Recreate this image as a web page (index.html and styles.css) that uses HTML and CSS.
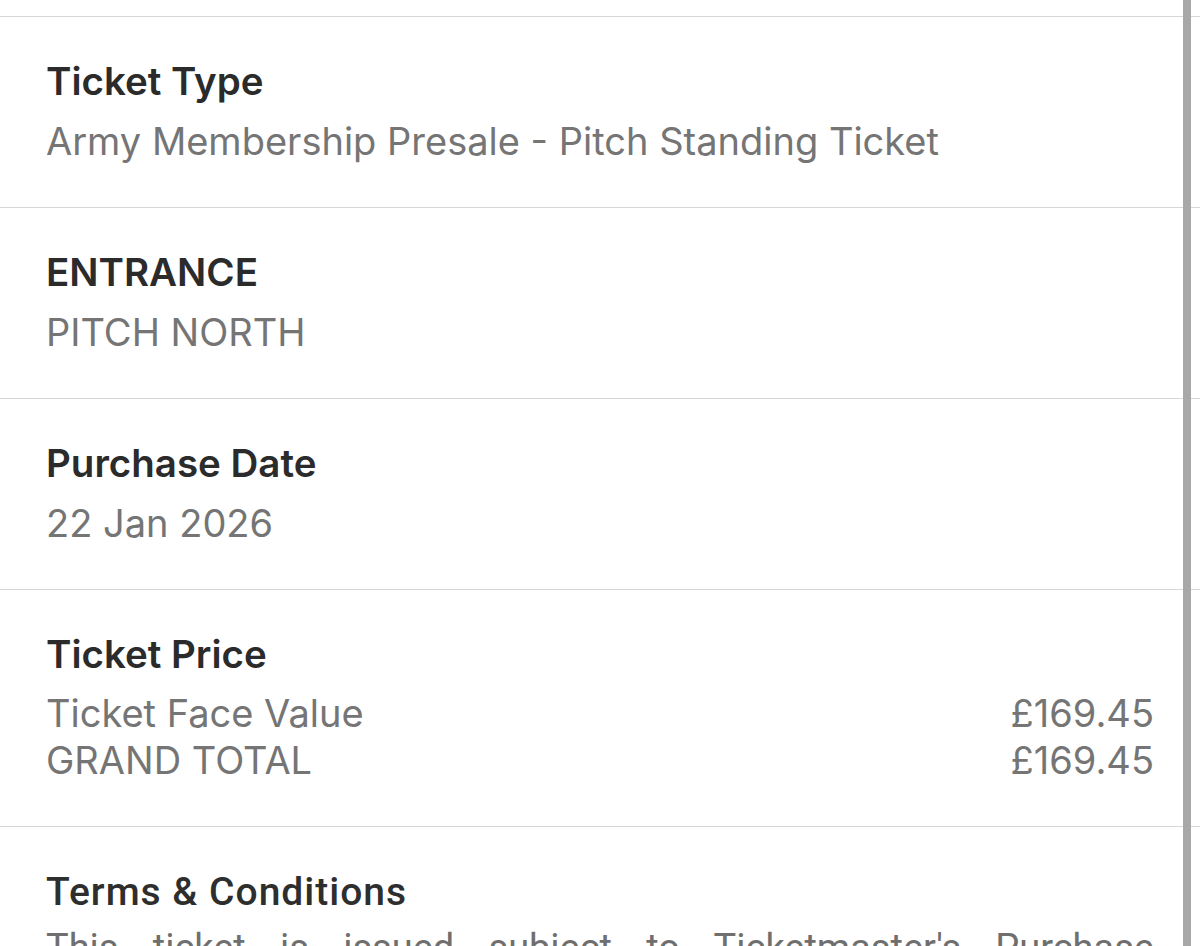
FILE: index.html
```html
<!DOCTYPE html>
<html lang="en">
<head>
<meta charset="utf-8">
<title>Ticket details</title>
<link rel="stylesheet" href="styles.css">
</head>
<body>
<main class="details">
  <div class="top-gap"></div>
  <section class="row">
    <h2 class="label">Ticket Type</h2>
    <p class="value">Army Membership Presale - Pitch Standing Ticket</p>
  </section>
  <section class="row">
    <h2 class="label">ENTRANCE</h2>
    <p class="value">PITCH NORTH</p>
  </section>
  <section class="row">
    <h2 class="label">Purchase Date</h2>
    <p class="value">22 Jan 2026</p>
  </section>
  <section class="row">
    <h2 class="label">Ticket Price</h2>
    <div class="price-list">
      <div class="price-line"><span>Ticket Face Value</span><span>£169.45</span></div>
      <div class="price-line"><span>GRAND TOTAL</span><span>£169.45</span></div>
    </div>
  </section>
  <section class="row terms">
    <h2 class="terms-title">Terms &amp; Conditions</h2>
    <p class="terms-line">This ticket is issued subject to Ticketmaster's Purchase</p>
    <p class="terms-rest">Policy and the terms and conditions of the event organiser and venue.</p>
  </section>
</main>
<div class="scrollbar"></div>
</body>
</html>
```
FILE: styles.css
```css
html, body {
  margin: 0;
  padding: 0;
  background: #ffffff;
  overflow: hidden;
  height: 946px;
}

.details {
  width: 1200px;
}

.top-gap {
  height: 16px;
  border-bottom: 1px solid #d6d6d6;
}

.row {
  border-bottom: 1px solid #d6d6d6;
  padding: 40px 46px 42px 46px;
}

.label {
  margin: 0;
  font-family: "Inter", "Noto Sans", sans-serif;
  font-weight: 600;
  font-size: 38.5px;
  line-height: 48px;
  color: #2b2b2b;
}

.value {
  margin: 12px 0 0 0;
  font-family: "Inter", "Noto Sans", sans-serif;
  font-weight: 400;
  font-size: 38px;
  line-height: 48px;
  color: #757575;
}

.price-list {
  margin-top: 12px;
  display: flex;
  flex-direction: column;
}

.price-line {
  display: flex;
  justify-content: space-between;
  font-family: "Inter", "Noto Sans", sans-serif;
  font-size: 38px;
  line-height: 47px;
  color: #757575;
}

.terms {
  padding-top: 41px;
}

.terms-title {
  margin: 0;
  font-family: "Roboto", "Noto Sans", sans-serif;
  font-weight: 500;
  font-size: 39px;
  line-height: 48px;
  letter-spacing: 1px;
  color: #2e2e2e;
}

.terms-line {
  margin: 8px 0 0 0;
  font-family: "Roboto", "Noto Sans", sans-serif;
  font-size: 38px;
  line-height: 48px;
  color: #6f6f6f;
  text-align: justify;
  text-align-last: justify;
}

.terms-rest {
  margin: 0;
  font-family: "Roboto", "Noto Sans", sans-serif;
  font-size: 38px;
  line-height: 48px;
  color: #6f6f6f;
  text-align: justify;
}

.scrollbar {
  position: fixed;
  top: 0;
  right: 9px;
  width: 8px;
  height: 946px;
  background: #a8a8a8;
}
```
